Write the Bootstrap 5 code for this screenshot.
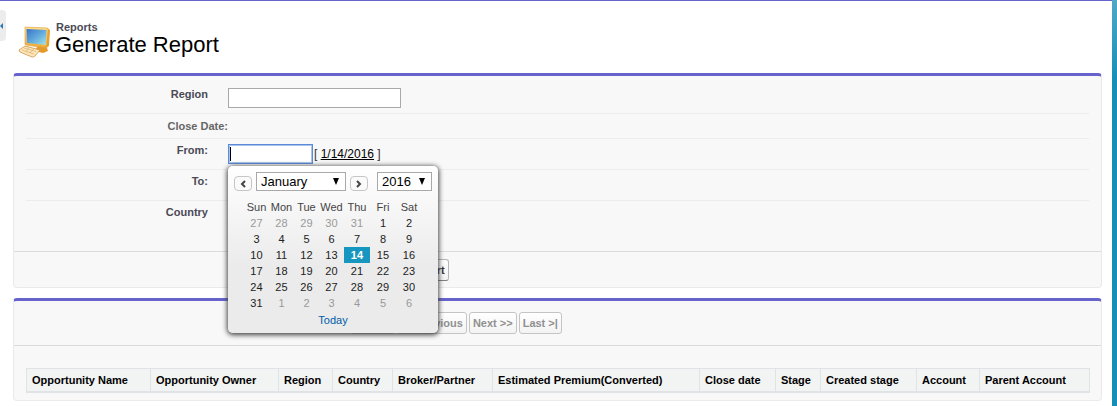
<!DOCTYPE html>
<html lang="en">
<head>
<meta charset="utf-8">
<meta name="viewport" content="width=device-width, initial-scale=1">
<title>Generate Report</title>
<link href="https://cdn.jsdelivr.net/npm/bootstrap@5.3.0/dist/css/bootstrap.min.css" rel="stylesheet">
<style>
:root { --accent: #6664cc; --teal: #1797c0; }
body { font-family: "Liberation Sans", Arial, sans-serif; font-size: 11px; line-height: 16px; color: #222;
  background: linear-gradient(#4fa9c6, #168fb7 80px, #168fb7); padding-right: 5px; min-height: 100vh; }
.page { min-height: 100vh; border-top: 1px solid var(--accent); padding: 0 10px 6px 13px; }
.side-toggle { left: 0; top: 9px; width: 6px; height: 31px; background: #ececec; border: 0; border-radius: 0 4px 4px 0; }
.side-toggle svg { width: 3px; height: 6px; }
.page-head { height: 72px; padding: 19px 0 0 5px; }
.page-icon { width: 32px; height: 34px; margin-top: 5px; }
.head-text { margin-left: 5px; }
.kicker { font-size: 11px; line-height: 14px; font-weight: bold; color: #4a4a56; padding-left: 1px; }
.page-head h1 { font-size: 22px; line-height: 22px; font-weight: normal; color: #000; }
.panel { background: #f8f8f8; border: 1px solid #eaeaea; border-top: 3px solid var(--accent); border-radius: 4px; }
.panel + .panel { margin-top: 10px; }
.form-area { padding: 12px 12px 19px; }
.field-row { display: flex; border-bottom: 1px solid #ececec; height: 31px; }
.field-row:last-child { border-bottom: 0; }
.field-row.first-row { height: 26px; }
.field-row.title-row { height: 25px; }
.field-label { width: 19%; flex: none; text-align: right; padding-right: 20px; font-weight: bold; color: #4a4a56; }
.title-row .field-label { padding: 4px 0 0; color: #666; }
.first-row .field-label { margin-top: -2px; }
.date-row .field-label { padding-top: 3px; }
.date-field { margin-top: 5px; }
.text-box { height: 20px; border: 1px solid #a9a9a9; background: #fff; padding: 1px 2px; font-size: 12px; }
.region-box { width: 173px; }
.date-box { width: 85px; outline: 0; }
.date-box.active-box { border: 1px solid #5b8bd8; box-shadow: inset 0 0 0 1px #a9c4ee; background: linear-gradient(#000, #000) 1px 50% / 1px 14px no-repeat #fff; }
.today-date { font-size: 12px; line-height: 20px; margin-left: 1px; color: #333; }
.today-date a { color: #000; }
.actions { border-top: 1px solid #dbdbdb; height: 36px; padding-top: 7px; }
.actions-inner { width: 40%; }
.pager { height: 45px; border-bottom: 1px solid #dbdbdb; padding-top: 11px; }
.pager-inner { width: 50.4%; gap: 2px; }
.sf-btn { font: bold 11px/16px "Liberation Sans", Arial, sans-serif; height: 22px; padding: 2px 3px; border: 1px solid #b5b5b5; border-bottom-color: #7f7f7f; border-radius: 3px; color: #333; background: linear-gradient(#fff, #f3f3f3); white-space: nowrap; }
.sf-btn:disabled { color: #909090; border-color: #c4c4c4; }
.results { padding: 22px 12px 7px; }
.results table { width: 100%; table-layout: fixed; border-collapse: collapse; }
.results th { height: 23px; padding: 0 0 0 5px; border: 1px solid #e0e3e5; border-bottom: 2px solid #e0e3e5; background: #f2f3f3; color: #000; white-space: nowrap; line-height: 20px; }
.results th:nth-child(1) { width: 124px; } .results th:nth-child(2) { width: 128px; }
.results th:nth-child(3) { width: 54px; } .results th:nth-child(4) { width: 60px; }
.results th:nth-child(5) { width: 100px; } .results th:nth-child(6) { width: 207px; }
.results th:nth-child(7) { width: 76px; } .results th:nth-child(8) { width: 45px; }
.results th:nth-child(9) { width: 96px; } .results th:nth-child(10) { width: 63px; }
.results th:nth-child(11) { width: 110px; }
.date-picker { top: 22px; left: 0; z-index: 5; width: 210px; padding: 6px 6px 4px; border-radius: 5px;
  background: linear-gradient(#fff, #ebebeb 60%, #ebebeb); box-shadow: 0 1px 5px 1px #444; }
.step { width: 18px; height: 15px; margin-top: 4px; padding: 0; border: 1px solid #c4c6ca; border-radius: 4px; background: #fafafa; display: flex; align-items: center; justify-content: center; }
.step svg { width: 6px; height: 8px; fill: none; stroke: #444; stroke-width: 2; }
.pick { appearance: none; height: 19px; border: 1px solid #a9a9a9; padding: 0 4px; font-size: 13px; line-height: 17px; color: #000; border-radius: 0;
  background: url("data:image/svg+xml,%3Csvg xmlns='http://www.w3.org/2000/svg' viewBox='0 0 6 7'%3E%3Cpath d='M0 0h6L3 7z'/%3E%3C/svg%3E") right 6px center / 6px 7px no-repeat #fff; }
.pick-month { width: 90px; margin: 0 4px; }
.pick-year { width: 55px; margin-left: 9px; }
.days { width: 178px; margin: 8px 0 0 10px; table-layout: fixed; border-collapse: collapse; text-align: center; }
.days th { font-weight: normal; color: #444; }
.days th, .days td { padding: 0; height: 16px; line-height: 16px; }
.days th:nth-child(5), .days th:nth-child(6), .days th:nth-child(7) { width: 26px; }
.days .other { color: #999; }
.days .chosen { background: var(--teal); color: #fff; font-weight: bold; }
.today-link { color: #015ba7; line-height: 18px; }
</style>
</head>
<body>
<main class="page bg-white position-relative">
  <button class="side-toggle position-absolute p-0 d-flex align-items-center" aria-label="Open sidebar"><svg viewBox="0 0 3 6"><path d="M3 0v6L0 3z" fill="#2a75b3"/></svg></button>
  <header class="page-head d-flex">
    <svg class="page-icon flex-shrink-0" viewBox="0 0 32 34" aria-hidden="true">
      <defs>
        <linearGradient id="scr" x1="0" y1="0" x2="1" y2="1"><stop offset="0" stop-color="#3a72c4"/><stop offset=".5" stop-color="#62a9de"/><stop offset="1" stop-color="#a5e6e4"/></linearGradient>
        <linearGradient id="gold" x1="0" y1="0" x2="0" y2="1"><stop offset="0" stop-color="#ffe08a"/><stop offset="1" stop-color="#f0a92f"/></linearGradient>
      </defs>
      <path d="M19 22l9-2 2 6-5 2-8-2z" fill="#e49b2c"/>
      <path d="M29 3l3 2-1 16-3 2z" fill="#e8a12f"/>
      <path d="M7 2l22 1q1 0 1 1l-1 18q0 1-1 1L8 20q-1 0-1-1z" fill="url(#gold)" stroke="#dd9b36" stroke-width=".6"/>
      <path d="M8.500 4l20 1-.8 15L9 18z" fill="url(#scr)"/>
      <path d="M1 25l6-4 15 4-5 6q-1 1-3 1L2 27q-1-1-1-2z" fill="#fbe6bb" stroke="#d39443" stroke-width=".8"/>
      <path d="M4 25l12 4M6 23l12 3.500M8 26.500l3-4M12 28l4-4.500" stroke="#e0b06c" stroke-width=".7" fill="none"/>
    </svg>
    <div class="head-text">
      <div class="kicker">Reports</div>
      <h1 class="m-0">Generate Report</h1>
    </div>
  </header>

  <form class="panel">
    <div class="form-area">
      <div class="field-row first-row">
        <label class="field-label" for="region">Region</label>
        <input class="text-box region-box" id="region" type="text">
      </div>
      <div class="field-row title-row"><div class="field-label">Close Date:</div></div>
      <div class="field-row date-row">
        <label class="field-label" for="from">From:</label>
        <div class="date-field position-relative d-flex align-items-start">
          <input class="text-box date-box active-box" id="from" type="text">
          <span class="today-date">[ <a href="#">1/14/2016</a> ]</span>
          <div class="date-picker position-absolute">
            <div class="d-flex">
              <button type="button" class="step" aria-label="Previous month"><svg viewBox="0 0 6 8"><path d="M5 1L2 4l3 3"/></svg></button>
              <select class="pick pick-month" aria-label="Month"><option>January</option></select>
              <button type="button" class="step" aria-label="Next month"><svg viewBox="0 0 6 8"><path d="M1 1l3 3-3 3"/></svg></button>
              <select class="pick pick-year" aria-label="Year"><option>2016</option></select>
            </div>
            <table class="days">
              <thead><tr><th>Sun</th><th>Mon</th><th>Tue</th><th>Wed</th><th>Thu</th><th>Fri</th><th>Sat</th></tr></thead>
              <tbody>
                <tr><td class="other">27</td><td class="other">28</td><td class="other">29</td><td class="other">30</td><td class="other">31</td><td>1</td><td>2</td></tr>
                <tr><td>3</td><td>4</td><td>5</td><td>6</td><td>7</td><td>8</td><td>9</td></tr>
                <tr><td>10</td><td>11</td><td>12</td><td>13</td><td class="chosen">14</td><td>15</td><td>16</td></tr>
                <tr><td>17</td><td>18</td><td>19</td><td>20</td><td>21</td><td>22</td><td>23</td></tr>
                <tr><td>24</td><td>25</td><td>26</td><td>27</td><td>28</td><td>29</td><td>30</td></tr>
                <tr><td>31</td><td class="other">1</td><td class="other">2</td><td class="other">3</td><td class="other">4</td><td class="other">5</td><td class="other">6</td></tr>
              </tbody>
            </table>
            <div class="text-center"><a class="today-link text-decoration-none" href="#">Today</a></div>
          </div>
        </div>
      </div>
      <div class="field-row date-row"><div class="field-label">To:</div></div>
      <div class="field-row date-row"><div class="field-label">Country</div></div>
    </div>
    <div class="actions"><div class="actions-inner d-flex justify-content-end"><button type="button" class="sf-btn">Generate Report</button></div></div>
  </form>

  <section class="panel">
    <div class="pager"><div class="pager-inner d-flex justify-content-end">
      <button class="sf-btn" disabled>|&lt; First</button>
      <button class="sf-btn" disabled>&lt;&lt; Previous</button>
      <button class="sf-btn" disabled>Next &gt;&gt;</button>
      <button class="sf-btn" disabled>Last &gt;|</button>
    </div></div>
    <div class="results">
      <table>
        <thead><tr><th>Opportunity Name</th><th>Opportunity Owner</th><th>Region</th><th>Country</th><th>Broker/Partner</th><th>Estimated Premium(Converted)</th><th>Close date</th><th>Stage</th><th>Created stage</th><th>Account</th><th>Parent Account</th></tr></thead>
      </table>
    </div>
  </section>
</main>
<script src="https://cdn.jsdelivr.net/npm/bootstrap@5.3.0/dist/js/bootstrap.bundle.min.js"></script>
</body>
</html>
